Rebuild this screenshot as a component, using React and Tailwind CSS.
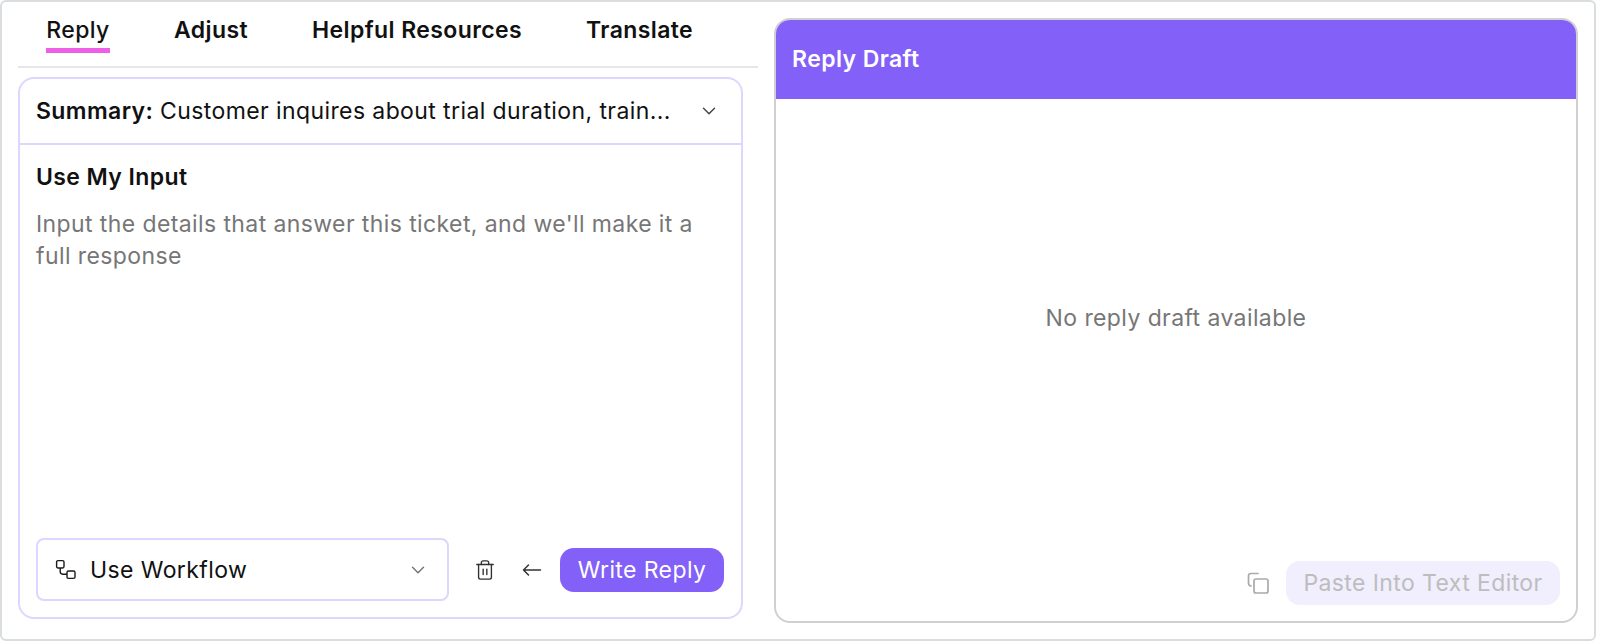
import React from "react";
import { ChevronDown, Trash2 } from "lucide-react";

function WorkflowIcon() {
  return (
    <svg width="22" height="22" viewBox="0 0 22 22" fill="none" stroke="#1a1a1a" strokeWidth="1.4">
      <rect x="1.6" y="1.6" width="7.4" height="7.4" rx="1.4" />
      <rect x="12" y="12" width="8" height="7.4" rx="1.4" />
      <path d="M5.2 9v3.6a2.6 2.6 0 0 0 2.6 2.6H12" />
    </svg>
  );
}

function LongArrow() {
  return (
    <svg width="20" height="14" viewBox="0 0 20 14" fill="none" stroke="#333" strokeWidth="1.5" strokeLinecap="round" strokeLinejoin="round">
      <path d="M18.5 7H1.5M6.5 2L1.5 7l5 5" />
    </svg>
  );
}

function CopyIcon() {
  return (
    <svg width="24" height="24" viewBox="0 0 24 24" fill="none" stroke="#aaa" strokeWidth="1.7" strokeLinecap="round">
      <rect x="8" y="8" width="14" height="14" rx="2" />
      <path d="M12 2.5H4.8a2.3 2.3 0 0 0-2.3 2.3V12a3 3 0 0 0 2.5 3" />
    </svg>
  );
}

export default function App() {
  return (
    <div className="w-[1600px] h-[641px] bg-white font-['Inter',sans-serif] text-[#111] tracking-[0.4px]">
      <div className="w-[1596px] h-[641px] border-2 border-[#d9dde0] rounded-[6px] flex gap-[16px] pl-[16px] pr-[16px] pt-[16px] pb-[16px]">
        <div className="w-[741px] flex flex-col pb-[4px]">
          <div className="h-[50px] border-b-2 border-[#e5e7e9] flex items-start pl-[28px]">
            <div className="flex flex-col items-center w-[64px]">
              <span className="text-[23px] leading-[24px] font-medium whitespace-nowrap">Reply</span>
              <span className="w-[64px] h-[5px] bg-[#ee5fe6] mt-[6px]"></span>
            </div>
            <span className="ml-[64px] text-[23px] leading-[24px] font-semibold">Adjust</span>
            <span className="ml-[64px] text-[23px] leading-[24px] font-semibold">Helpful Resources</span>
            <span className="ml-[64px] text-[23px] leading-[24px] font-semibold">Translate</span>
          </div>
          <div className="mt-[9px] w-[725px] flex-1 border-2 border-[#ddd6fe] rounded-[16px] flex flex-col">
            <div className="h-[66px] shrink-0 border-b-2 border-[#ddd6fe] flex items-center pl-[16px] pr-[21px] justify-between">
              <div className="text-[23px] leading-[28px] whitespace-nowrap">
                <span className="font-semibold">Summary:</span> Customer inquires about trial duration, train...
              </div>
              <ChevronDown size={22} color="#444" strokeWidth={1.6} />
            </div>
            <div className="flex-1 flex flex-col px-[16px] pt-[18px] pb-[16px]">
              <div className="text-[23px] leading-[28px] font-semibold">Use My Input</div>
              <div className="mt-[17px] text-[23px] leading-[32px] text-[#767676] flex-1">
                Input the details that answer this ticket, and we'll make it a full response
              </div>
              <div className="flex items-center">
                <div className="w-[413px] h-[63px] border-2 border-[#ddd6fe] rounded-[8px] flex items-center justify-between pl-[17px] pr-[18px]">
                  <div className="flex items-center gap-[13px]">
                    <WorkflowIcon />
                    <span className="text-[23px] leading-[28px]">Use Workflow</span>
                  </div>
                  <ChevronDown size={22} color="#777" strokeWidth={1.6} />
                </div>
                <Trash2 size={22} color="#333" strokeWidth={1.5} className="ml-[25px]" />
                <span className="ml-[26px]"><LongArrow /></span>
                <button className="ml-[18px] w-[164px] h-[44px] rounded-[14px] bg-[#8360f8] text-white text-[23px] leading-[28px]">Write Reply</button>
              </div>
            </div>
          </div>
        </div>
        <div className="w-[805px] border-2 border-[#d0d0d0] rounded-[16px] overflow-hidden flex flex-col">
          <div className="h-[79px] shrink-0 bg-[#8360f8] flex items-center pl-[16px] text-white text-[23px] font-semibold">Reply Draft</div>
          <div className="flex-1 flex items-center justify-center text-[23px] text-[#767676] pb-[24px]">No reply draft available</div>
          <div className="flex items-center justify-end gap-[16px] pr-[16px] pb-[16px]">
            <CopyIcon />
            <button className="w-[274px] h-[44px] rounded-[14px] bg-[#f1eefe] text-[#bdbdbd] text-[23px] leading-[28px]">Paste Into Text Editor</button>
          </div>
        </div>
      </div>
    </div>
  );
}
